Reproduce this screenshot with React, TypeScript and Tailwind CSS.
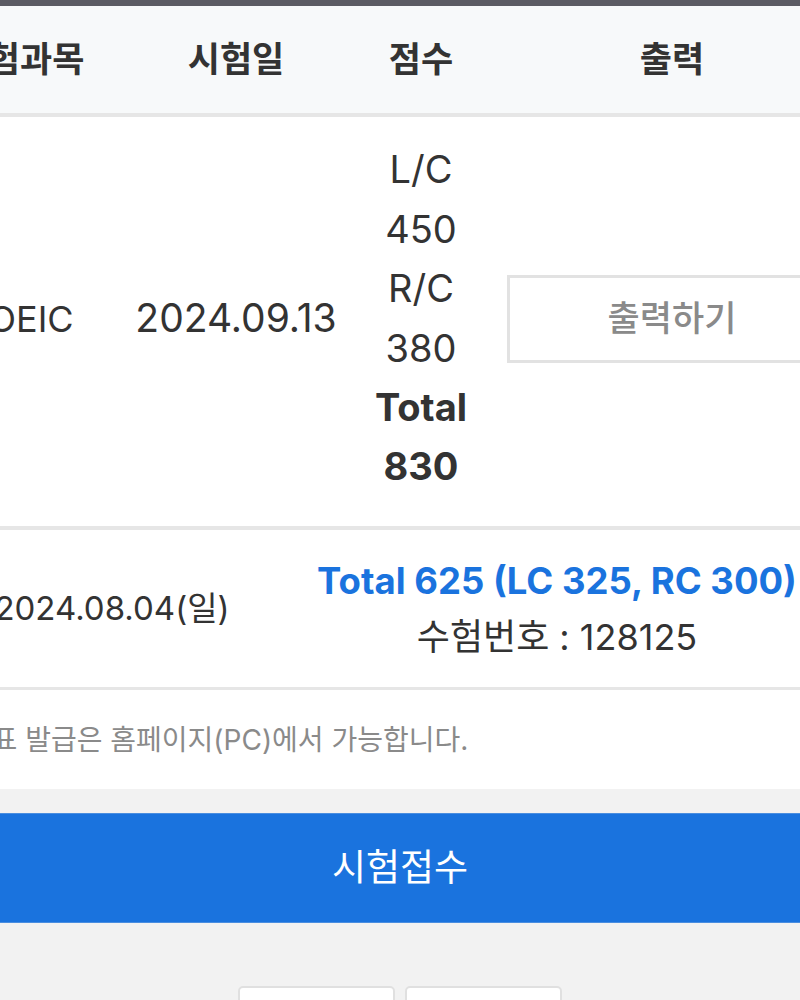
import React from "react";

const font = { fontFamily: '"Inter", "Noto Sans CJK KR", sans-serif' };

export default function App() {
  return (
    <div
      className="w-[800px] h-[1000px] overflow-hidden bg-[#f2f2f2] text-[#333]"
      style={font}
    >
      <div className="h-[6px] bg-[#5b5b63]" />
      <div className="bg-white">
        <div className="ml-[-87px] w-[934px]">
          {/* header */}
          <div className="grid grid-cols-[214px_218px_152px_350px] h-[111px] bg-[#f7f9fa] border-b-[4px] border-[#e6e6e6] items-center text-center text-[35px] font-semibold text-[#333]">
            <div>시험과목</div>
            <div>시험일</div>
            <div>점수</div>
            <div>출력</div>
          </div>
          {/* row 1 */}
          <div className="grid grid-cols-[214px_218px_152px_350px] h-[413px] pb-[6px] border-b-[4px] border-[#e6e6e6] items-center text-center text-[38px]">
            <div className="text-[36px]">TOEIC</div>
            <div className="text-[39px]">2024.09.13</div>
            <div className="flex flex-col leading-[59.4px]">
              <span>L/C</span>
              <span>450</span>
              <span>R/C</span>
              <span>380</span>
              <span className="font-bold">Total</span>
              <span className="font-bold">830</span>
            </div>
            <div className="pl-[10px] pr-[10px]">
              <div className="h-[88px] border-[3px] border-[#e2e2e2] flex items-center justify-center text-[#8a8a8a] font-medium text-[35px]">
                출력하기
              </div>
            </div>
          </div>
          {/* row 2 */}
          <div className="grid grid-cols-[398px_492px] h-[160px] border-b-[3px] border-[#e6e6e6] items-center text-center text-[33px]">
            <div>2024.08.04(일)</div>
            <div className="flex flex-col leading-[56px] text-[36px]">
              <span className="font-bold text-[#1a73de] text-[36.5px]">Total 625 (LC 325, RC 300)</span>
              <span>수험번호 : 128125</span>
            </div>
          </div>
        </div>
        <div className="h-[99px] flex items-center ml-[-60px] text-[28px] text-[#8a8a8a] whitespace-nowrap">
          성적표 발급은 홈페이지(PC)에서 가능합니다.
        </div>
      </div>
      <div className="mt-[24px] h-[110px] bg-[#1a73de] border-y border-[#4a8ee0] flex items-center justify-center text-white text-[37px]">
        시험접수
      </div>
      <div className="mt-[63px] flex justify-center gap-[10px]">
        <div className="w-[157px] h-[40px] bg-white border-2 border-[#e0e0e0] rounded-[5px]" />
        <div className="w-[157px] h-[40px] bg-white border-2 border-[#e0e0e0] rounded-[5px]" />
      </div>
    </div>
  );
}
